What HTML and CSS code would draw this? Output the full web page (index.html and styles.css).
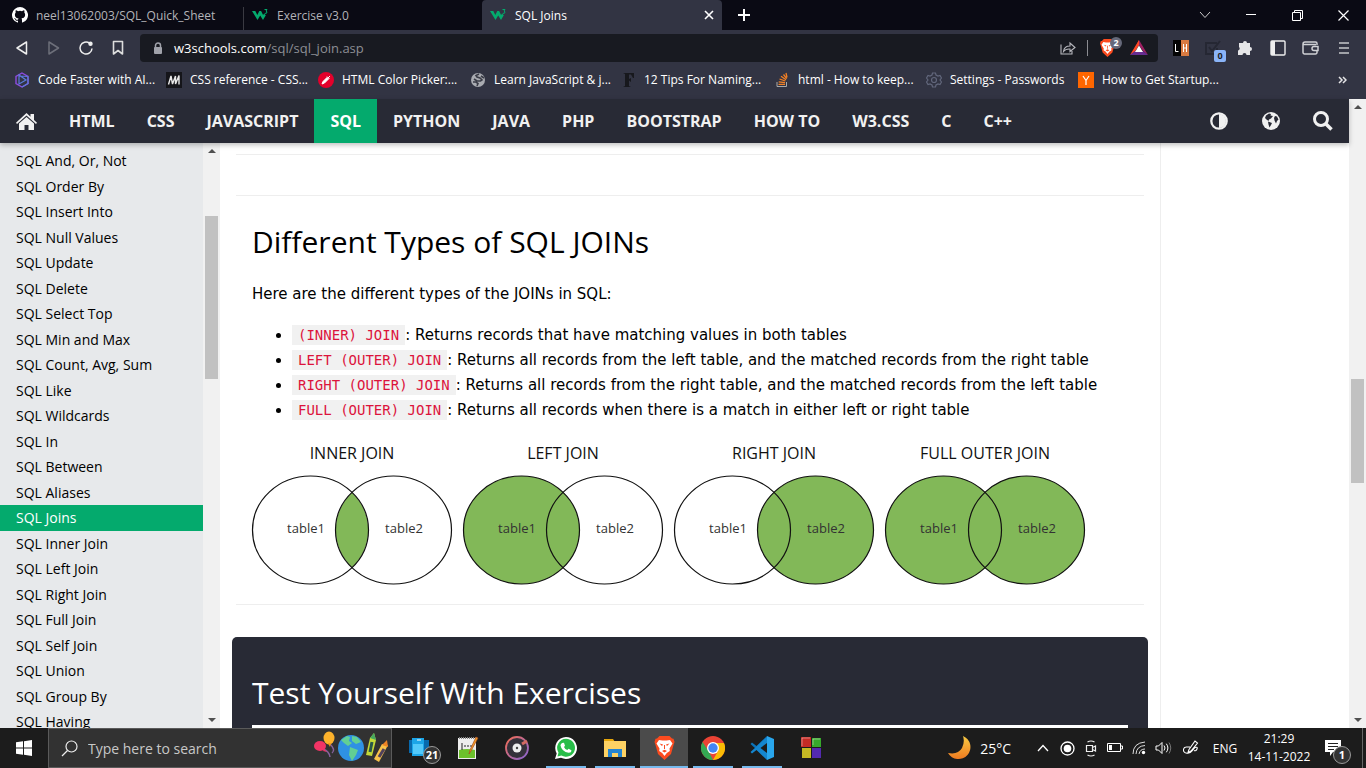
FILE: index.html
```html
<!DOCTYPE html>
<html lang="en">
<head>
<meta charset="utf-8">
<title>SQL Joins</title>
<link rel="stylesheet" href="styles.css">
</head>
<body>
<svg class="defs" aria-hidden="true">
  <symbol id="w3" viewBox="0 0 17 14"><path d="M0 3h3.300l2 4 2-4h1.800l2 4 1-1.500 1.700 1.700L11 12 8.200 7.500 5.500 12z" fill="#04aa6d"/><path d="M12.500 1.500h2.500l-1 1.500q1.800.6.5 2.200l-1.700.2" fill="none" stroke="#04aa6d"/></symbol>
  <symbol id="brave" viewBox="0 0 20 24"><path d="M5 0h10l2.500 2.500L19 2.800 20 6l-1 3-2.500 9L10 24l-6.500-6L1 9 0 6l1-3.200 1.500-.3z" fill="#fb4b1f"/><path d="M4.500 4L8 4.500h4L15.500 4 18 7.500l-3 5 .3 2.500-3 2L10 20l-2.300-3-3-2 .3-2.500-3-5z" fill="#fff"/><path d="M5 7.500l3.500 1L7.500 10zM15 7.500l-3.500 1 1 1.500zM9.500 9h1v4h-1zM7.500 15l2.500-1.300 2.500 1.300-2.500 1.500z" fill="#fb4b1f"/></symbol>
</svg>

<header class="browser">
  <div class="tabs">
    <button class="tab"><svg width="16" height="16" viewBox="0 0 16 16"><path fill="#fff" d="M8 0a8 8 0 0 0-2.530 15.590c.4.070.55-.17.55-.38v-1.490c-2.230.48-2.700-.95-2.700-.95-.36-.92-.890-1.170-.890-1.170-.73-.5.060-.49.060-.49.800.060 1.230.83 1.230.83.710 1.220 1.870.87 2.330.66.070-.52.280-.87.500-1.070-1.770-.2-3.640-.89-3.640-3.950 0-.87.310-1.590.820-2.150-.08-.2-.36-1.010.080-2.120 0 0 .67-.21 2.200.82a7.600 7.600 0 0 1 4 0c1.530-1.040 2.200-.82 2.200-.82.440 1.110.160 1.920.080 2.120.510.560.820 1.280.820 2.150 0 3.070-1.870 3.750-3.650 3.950.290.250.540.730.540 1.480v2.200c0 .21.150.46.550.38A8 8 0 0 0 8 0z"/></svg><span>neel13062003/SQL_Quick_Sheet</span></button>
    <button class="tab divided"><svg width="17" height="14"><use href="#w3"/></svg><span>Exercise v3.0</span></button>
    <button class="tab current"><svg width="17" height="14"><use href="#w3"/></svg><span>SQL Joins</span>
      <svg class="tab-close" width="10" height="10" viewBox="0 0 10 10"><path d="M1 1l8 8M9 1L1 9" stroke="#fff" stroke-width="1.600"/></svg></button>
    <button class="new-tab" aria-label="New tab"><svg width="12" height="12" viewBox="0 0 12 12"><path d="M6 0v12M0 6h12" stroke="#fff" stroke-width="2"/></svg></button>
    <div class="window-controls">
      <button aria-label="Search tabs"><svg width="12" height="12" viewBox="0 0 12 12"><path d="M1 3l5 5.500L11 3" fill="none" stroke="#ccc"/></svg></button>
      <button aria-label="Minimize"><svg width="10" height="12" viewBox="0 0 10 12"><path d="M0 5.500h10" stroke="#fff"/></svg></button>
      <button aria-label="Restore"><svg width="11" height="11" viewBox="0 0 11 11"><path d="M.5 2.500h8v8h-8zM2.500 2.500v-2h8v8h-2" fill="none" stroke="#fff"/></svg></button>
      <button aria-label="Close"><svg width="11" height="11" viewBox="0 0 11 11"><path d="M.5.5l10 10M10.500.5l-10 10" stroke="#fff" stroke-width="1.200"/></svg></button>
    </div>
  </div>

  <div class="toolbar">
    <div class="history">
      <button aria-label="Back"><svg width="14" height="16" viewBox="0 0 14 16"><path d="M11.500 2v12L2 8z" fill="none" stroke="#eee" stroke-width="1.500" stroke-linejoin="round"/></svg></button>
      <button aria-label="Forward"><svg width="14" height="16" viewBox="0 0 14 16"><path d="M2 2v12l9.500-6z" fill="none" stroke="#6d6f7a" stroke-width="1.500" stroke-linejoin="round"/></svg></button>
      <button aria-label="Reload"><svg width="16" height="16" viewBox="0 0 16 16"><path d="M11.500 3.200A6 6 0 1 0 14 8.500" fill="none" stroke="#eee" stroke-width="1.500"/><circle cx="12.500" cy="3.800" r="2.200" fill="#eee"/></svg></button>
      <button aria-label="Bookmark"><svg width="12" height="16" viewBox="0 0 12 16"><path d="M1.500 1.500h9v12.500L6 10.500 1.500 14z" fill="none" stroke="#ddd" stroke-width="1.600" stroke-linejoin="round"/></svg></button>
    </div>
    <div class="address">
      <svg width="10" height="13" viewBox="0 0 10 13"><path d="M2.500 6V3.500a2.500 2.500 0 0 1 5 0V6" fill="none" stroke="#a0a2aa" stroke-width="1.500"/><rect x="1" y="5" width="8" height="7" rx="1" fill="#a0a2aa"/></svg>
      <div class="url" role="textbox" aria-label="Address">w3schools.com<span>/sql/sql_join.asp</span></div>
      <button aria-label="Share"><svg width="16" height="16" viewBox="0 0 16 16"><path d="M1 4.500v9.500h11v-3M3.500 11.500C4 7.500 6.500 6 10 6V3l5 4.500-5 4V9C7 8.800 5 9.500 3.500 11.500z" fill="none" stroke="#b8b9bf" stroke-width="1.100"/></svg></button>
      <i class="address-line"></i>
      <button class="shield" aria-label="Shields"><svg width="15" height="18"><use href="#brave"/></svg><b>2</b></button>
      <button aria-label="Rewards"><svg width="18" height="16" viewBox="0 0 18 16"><path d="M9 0l9 15-5-4-4-6-4 6-2 .5z" fill="#9e1f63"/><path d="M9 0L0 15l5-3.500L9 5z" fill="#ff4724"/><path d="M0 15h18l-5-4H5z" fill="#662d91"/><path d="M9 5.500L5 12h8z" fill="#fff"/></svg></button>
    </div>
    <div class="extensions">
      <button aria-label="LH extension"><svg width="16" height="16" viewBox="0 0 16 16"><path fill="#050505" d="M0 0h8v16H0z"/><path fill="#d97a41" d="M8 0h8v16H8z"/><path d="M2.500 4v7.500h3M10.500 4v8M13.500 4v8M10.500 8h3" fill="none" stroke="#fff"/></svg></button>
      <button class="counter" aria-label="Tasks"><svg width="16" height="16" viewBox="0 0 16 16"><path d="M12 3H1v11h11V8M4 7l3 4 8-10" fill="none" stroke="#252733" stroke-width="2"/></svg><b>0</b></button>
      <button aria-label="Extensions"><svg width="16" height="16" viewBox="0 0 16 16"><path fill="#e6e6e8" d="M2 3h4a2 2 0 1 1 4 0h3v4a2 2 0 1 1 0 4v4H9.500a2 2 0 0 0-4 0H1v-4.500a2 2 0 0 0 1-3.500z"/></svg></button>
      <button aria-label="Sidebar"><svg width="16" height="16" viewBox="0 0 16 16"><rect x="1" y="1" width="14" height="14" rx="1" fill="none" stroke="#eee" stroke-width="1.400"/><path fill="#eee" d="M1 1h4v14H1z"/></svg></button>
      <button aria-label="Wallet"><svg width="17" height="16" viewBox="0 0 17 16"><path d="M15 5V3.500a1.500 1.500 0 0 0-1.500-1.500H3a2 2 0 0 0-2 2v8.500A1.500 1.500 0 0 0 2.500 14h11a1.500 1.500 0 0 0 1.500-1.500V11M1 4.500h13M16 6.500h-4a2 2 0 0 0 0 4h4z" fill="none" stroke="#d0d1d5" stroke-width="1.500"/></svg></button>
      <button aria-label="Menu"><svg width="10" height="12" viewBox="0 0 10 12"><path d="M0 1h10M0 6h10M0 11h10" stroke="#c5c6ca" stroke-width="1.600"/></svg></button>
    </div>
  </div>

  <nav class="bookmarks" aria-label="Bookmarks">
    <a href="#"><svg width="16" height="16" viewBox="0 0 16 16"><path d="M8 1l6 3.500v7L8 15l-6-3.500v-7z" fill="none" stroke="#8d4be0" stroke-width="1.400"/><path d="M8 15l6-3.500v-7M5 3v9l7-4zM14 4.500L5 4" fill="none" stroke="#5b7bdc" stroke-width="1.200"/></svg><span>Code Faster with AI...</span></a>
    <a href="#"><svg width="16" height="16" viewBox="0 0 16 16"><path fill="#15151a" d="M0 0h16v16H0z"/><path d="M2.500 12.500L5 4l1.500 8L9.500 4v8L13 3.500v9" fill="none" stroke="#e8e8e8" stroke-width="1.400" stroke-linejoin="bevel"/></svg><span>CSS reference - CSS...</span></a>
    <a href="#"><svg width="16" height="16" viewBox="0 0 16 16"><circle cx="8" cy="8" r="8" fill="#e4002b"/><path d="M4 12l1-2.500 4-4L10.500 7l-4 4zM9 4.500L11.500 7M10 6l2-2" fill="#fff" stroke="#fff"/></svg><span>HTML Color Picker:...</span></a>
    <a href="#"><svg width="16" height="16" viewBox="0 0 16 16"><circle cx="8" cy="8" r="7" fill="#a9abb1"/><path d="M9 2l-3 1.500L7 5l3 1 2 2-1.500 1H7L4 7M3 10h3l2 1.500L7 14M11 4l3 2" fill="none" stroke="#3a3c47" stroke-width="1.600"/></svg><span>Learn JavaScript &amp; j...</span></a>
    <a href="#"><svg width="14" height="16" viewBox="0 0 14 16"><path fill="#17181d" d="M1 1h11v5h-1L9 2.500H7V7l2-1v4L7 8.500V14l2 1H1l2-1V2z"/></svg><span>12 Tips For Naming...</span></a>
    <a href="#"><svg width="16" height="16" viewBox="0 0 16 16"><path d="M3 10v4.500h9.500V10" fill="none" stroke="#aaa"/><path d="M4.500 12.300H11M4.700 9.800l6.300.8M5.500 7l5.900 2M7 4.300l5 3.500M9.500 2.500l3.200 4.200M12 1l1 4.500" stroke="#f48024" stroke-width="1.300"/></svg><span>html - How to keep...</span></a>
    <a href="#"><svg width="16" height="16" viewBox="0 0 16 16"><path d="M6.500 1h3l.5 2 2 1 2-.6 1.500 2.600L14 8l1.500 2-1.500 2.600-2-.6-2 1-.5 2h-3L6 13l-2-1-2 .6L.5 10 2 8 .5 6 2 3.400 4 4l2-1z" fill="none" stroke="#62677c" stroke-width="1.200"/><circle cx="8" cy="8" r="2.500" fill="none" stroke="#62677c" stroke-width="1.200"/></svg><span>Settings - Passwords</span></a>
    <a href="#"><svg width="16" height="16" viewBox="0 0 16 16"><path fill="#f60" d="M0 0h16v16H0z"/><path d="M5 4l3 4.500L11 4M8 8.500V13" fill="none" stroke="#fff" stroke-width="1.200"/></svg><span>How to Get Startup...</span></a>
    <button class="more" aria-label="More bookmarks"><svg width="9" height="8" viewBox="0 0 9 8"><path d="M1 1l3 3-3 3M5 1l3 3-3 3" fill="none" stroke="#e4e4e6" stroke-width="1.500"/></svg></button>
  </nav>
</header>

<div class="viewport">
  <div class="page">
    <nav class="topnav" aria-label="Tutorials">
      <a class="home" href="#" aria-label="Home"><svg width="21" height="17" viewBox="0 0 21 17"><path fill="#f1f1f1" d="M10.500 0l4 3.700V1H18v6l3 2.700-1 1.300L10.500 2.500 1 11 0 9.700z"/><path fill="#f1f1f1" d="M10.500 4L18 10.500V17h-5.500v-5h-4v5H3v-6.500z"/></svg></a>
      <a href="#">HTML</a><a href="#">CSS</a><a href="#">JAVASCRIPT</a><a class="selected" href="#">SQL</a><a href="#">PYTHON</a><a href="#">JAVA</a><a href="#">PHP</a><a href="#">BOOTSTRAP</a><a href="#">HOW TO</a><a href="#">W3.CSS</a><a href="#">C</a><a href="#">C++</a>
      <div class="site-tools">
        <button aria-label="Dark mode"><svg width="18" height="18" viewBox="0 0 18 18"><circle cx="9" cy="9" r="7.700" fill="none" stroke="#f1f1f1" stroke-width="2.300"/><path d="M9 2v14a7 7 0 0 0 0-14z" fill="#f1f1f1"/></svg></button>
        <button aria-label="Language"><svg width="18" height="18" viewBox="0 0 18 18"><circle cx="9" cy="9" r="9" fill="#f1f1f1"/><path fill="#282a35" d="M4 3.500l3-2 2 .5-.5 1.500L11 4 9 6.500 7 7.500 6.500 9l-2-1.500L3 6zM6 9.500l4 1.500-1 2-1.500 2.500-1-3zM13 4l2 .5 1.500 3L15 9l-1 2.500-1.500-3L12 6z"/></svg></button>
        <button aria-label="Search"><svg width="20" height="20" viewBox="0 0 20 20"><circle cx="8" cy="8" r="6.500" fill="none" stroke="#f1f1f1" stroke-width="3"/><path d="M12.500 12.500l6 6" stroke="#f1f1f1" stroke-width="3.500"/></svg></button>
      </div>
    </nav>

    <div class="columns">
      <nav class="sidebar" aria-label="SQL tutorial">
        <ul>
          <li><a href="#">SQL And, Or, Not</a></li>
          <li><a href="#">SQL Order By</a></li>
          <li><a href="#">SQL Insert Into</a></li>
          <li><a href="#">SQL Null Values</a></li>
          <li><a href="#">SQL Update</a></li>
          <li><a href="#">SQL Delete</a></li>
          <li><a href="#">SQL Select Top</a></li>
          <li><a href="#">SQL Min and Max</a></li>
          <li><a href="#">SQL Count, Avg, Sum</a></li>
          <li><a href="#">SQL Like</a></li>
          <li><a href="#">SQL Wildcards</a></li>
          <li><a href="#">SQL In</a></li>
          <li><a href="#">SQL Between</a></li>
          <li><a href="#">SQL Aliases</a></li>
          <li class="selected"><a href="#">SQL Joins</a></li>
          <li><a href="#">SQL Inner Join</a></li>
          <li><a href="#">SQL Left Join</a></li>
          <li><a href="#">SQL Right Join</a></li>
          <li><a href="#">SQL Full Join</a></li>
          <li><a href="#">SQL Self Join</a></li>
          <li><a href="#">SQL Union</a></li>
          <li><a href="#">SQL Group By</a></li>
          <li><a href="#">SQL Having</a></li>
        </ul>
      </nav>
      <div class="scrollbar sidebar-scroll" aria-hidden="true"><i class="up"></i><div class="track"><i class="thumb"></i></div><i class="down"></i></div>

      <main>
        <hr>
        <hr>
        <section class="article">
          <h2>Different Types of SQL JOINs</h2>
          <p>Here are the different types of the JOINs in SQL:</p>
          <ul>
            <li><code>(INNER) JOIN</code>: Returns records that have matching values in both tables</li>
            <li><code>LEFT (OUTER) JOIN</code>: Returns all records from the left table, and the matched records from the right table</li>
            <li><code>RIGHT (OUTER) JOIN</code>: Returns all records from the right table, and the matched records from the left table</li>
            <li><code>FULL (OUTER) JOIN</code>: Returns all records when there is a match in either left or right table</li>
          </ul>
          <div class="diagrams">
            <svg class="venn" viewBox="0 0 201 144"><text class="name" x="100" y="19">INNER JOIN</text><path class="fill" d="M100 52.500a58 54 0 0 1 0 75a58 54 0 0 1 0-75z"/><ellipse cx="58.500" cy="90" rx="58" ry="54"/><ellipse cx="141.500" cy="90" rx="58" ry="54"/><text x="54" y="93">table1</text><text x="152" y="93">table2</text></svg>
            <svg class="venn" viewBox="0 0 201 144"><text class="name" x="100" y="19">LEFT JOIN</text><ellipse class="fill" cx="58.500" cy="90" rx="58" ry="54"/><ellipse cx="58.500" cy="90" rx="58" ry="54"/><ellipse cx="141.500" cy="90" rx="58" ry="54"/><text x="54" y="93">table1</text><text x="152" y="93">table2</text></svg>
            <svg class="venn" viewBox="0 0 201 144"><text class="name" x="100" y="19">RIGHT JOIN</text><ellipse class="fill" cx="141.500" cy="90" rx="58" ry="54"/><ellipse cx="58.500" cy="90" rx="58" ry="54"/><ellipse cx="141.500" cy="90" rx="58" ry="54"/><text x="54" y="93">table1</text><text x="152" y="93">table2</text></svg>
            <svg class="venn" viewBox="0 0 201 144"><text class="name" x="100" y="19">FULL OUTER JOIN</text><ellipse class="fill" cx="58.500" cy="90" rx="58" ry="54"/><ellipse class="fill" cx="141.500" cy="90" rx="58" ry="54"/><ellipse cx="58.500" cy="90" rx="58" ry="54"/><ellipse cx="141.500" cy="90" rx="58" ry="54"/><text x="54" y="93">table1</text><text x="152" y="93">table2</text></svg>
          </div>
        </section>
        <hr>
        <section class="exercise">
          <h2>Test Yourself With Exercises</h2>
          <div class="exercise-window"></div>
        </section>
      </main>
      <aside class="rail"></aside>
    </div>
  </div>
  <div class="scrollbar page-scroll" aria-hidden="true"><i class="up"></i><div class="track"><i class="thumb"></i></div><i class="down"></i></div>
</div>

<footer class="taskbar">
  <button class="start" aria-label="Start"><svg width="16" height="16" viewBox="0 0 16 16"><path fill="#fff" d="M0 2.300L7 1.300V7.500H0zM8 1.200L16 0v7.500H8zM0 8.500h7v6.200l-7-1zM8 8.500h8V16l-8-1.200z"/></svg></button>
  <label class="search">
    <svg width="17" height="17" viewBox="0 0 17 17"><circle cx="10.500" cy="6.500" r="5.500" fill="none" stroke="#eee" stroke-width="1.200"/><path d="M6.500 10.500L1 16" stroke="#eee" stroke-width="1.300"/></svg>
    <input type="text" placeholder="Type here to search" aria-label="Type here to search">
    <svg width="76" height="34" viewBox="0 0 76 34"><path d="M9 18q6 2 7 8M16 13q6 6 2 9" fill="none" stroke="#87619c" stroke-width="1.500"/><ellipse cx="6" cy="15" rx="6" ry="5" fill="#f23465"/><path d="M10 18l3 3-4-1z" fill="#f23465"/><ellipse cx="15" cy="7" rx="5.500" ry="6.500" fill="#fdb22b"/><path d="M14 12h3l-1 4z" fill="#f59b17"/><circle cx="37" cy="17" r="13" fill="#2f91e3"/><path fill="#62cf94" d="M27 9l6-4 3 1-1 4 3 2-4 3-4-3zM38 5l5 1 4 5-5 2-4-3zM36 16l8 3-2 5-4 6-3-6z"/><path d="M56 7l4-5 2 7-4 16-6-1z" fill="#c4d938"/><path d="M56 7l4-5 2 7z" fill="#46a95f"/><path d="M58 11l-2 10" stroke="#28564b" stroke-width="3"/><path d="M74 14l-9 17-5-3 8-15z" fill="#f8c34b"/><path d="M68 14l5-5 1 7z" fill="#ed8425"/><path d="M70 18l-5 8" stroke="#50415c" stroke-width="3"/></svg>
  </label>
  <div class="apps">
    <button class="badge-app" aria-label="Your Phone"><svg width="22" height="24" viewBox="0 0 22 24"><path fill="#0869ad" d="M1 4h20v13H1z"/><rect x="4" y="2" width="12" height="18" fill="#1ba5e8"/><path fill="#53c9fa" d="M5 8h10v10H5z"/><path d="M9 4h4" stroke="#fff"/></svg><b>21</b></button>
    <button aria-label="Notepad++"><svg width="24" height="24" viewBox="0 0 24 24"><path fill="#eee" d="M2 2h18v21H2z"/><path fill="#6cc12b" d="M3 14q8-2 16 0v8H3z"/><path d="M3 2h17" stroke="#888" stroke-width="2" stroke-dasharray="1 1"/><path d="M6 7v7M8 10h2M11 10h2M14 10h2" stroke="#222"/><path d="M22 2l-7 13-2 3 1-4 6-13z" fill="#f49e24" stroke="#a64c22" stroke-width=".7"/></svg></button>
    <button aria-label="Music"><svg width="24" height="24" viewBox="0 0 24 24"><defs><linearGradient id="ring" x1="0" y1="0" x2="1" y2="1"><stop stop-color="#f36d53"/><stop offset="1" stop-color="#8564d4"/></linearGradient></defs><circle cx="12" cy="12" r="11" fill="#34313a" stroke="url(#ring)" stroke-width="1.800"/><circle cx="12" cy="12" r="4.500" fill="#eee"/><circle cx="12" cy="12" r="1.200" fill="#444"/><path d="M17 8l5-3" stroke="#d26b62" stroke-width="3"/></svg></button>
    <button class="running" aria-label="WhatsApp"><svg width="24" height="24" viewBox="0 0 24 24"><path fill="#fff" d="M12 1a11 11 0 1 1-5 20.800L1 23l1.700-5.500A11 11 0 0 1 12 1z"/><path fill="#28bd49" d="M12 2.800a9 9 0 1 1-4.500 16.800L3.500 20.500l1-4A9 9 0 0 1 12 2.800z"/><path fill="#fff" d="M8 7l2-.3 1 3-1 1.200q1 2.200 3.300 3.200l1.300-1.300 2.800 1.500q.2 2.500-2.700 2.500-7-1-8.200-7.300Q6.500 8 8 7z"/></svg></button>
    <button class="running" aria-label="File Explorer"><svg width="24" height="24" viewBox="0 0 24 24"><path fill="#e6a60b" d="M1 3h9l2 3H1z"/><path fill="#fdd264" d="M1 5h22v16H1z"/><path fill="#2485d2" d="M5 13h14v8h-4v-4H9v4H5z"/></svg></button>
    <button class="running active" aria-label="Brave"><svg width="21" height="24"><use href="#brave"/></svg></button>
    <button class="running" aria-label="Chrome"><svg width="24" height="24" viewBox="0 0 24 24"><circle cx="12" cy="12" r="12" fill="#ea4335"/><path fill="#34a853" d="M1.600 6L8 16l4 8A12 12 0 0 1 1.600 6z"/><path fill="#fbbc05" d="M12 7h11a12 12 0 0 1-11 17l5-9z"/><circle cx="12" cy="12" r="6" fill="#fff"/><circle cx="12" cy="12" r="4.700" fill="#4285f4"/></svg></button>
    <button class="running" aria-label="Visual Studio Code"><svg width="24" height="24" viewBox="0 0 24 24"><path fill="#0b73b9" d="M17 0L6.500 10 2 6.500.5 8l17 15.500 1-5V6z"/><path fill="#1486cf" d="M17 24L6.500 14 2 17.500.5 16 17 1z"/><path fill="#29a6ec" d="M17 0l7 3v18l-7 3z"/><path fill="#1c1c1c" d="M17 7v10l-6.500-5z"/></svg></button>
    <button aria-label="Code::Blocks"><svg width="22" height="24" viewBox="0 0 22 24"><path fill="#c52b25" d="M1 1h10v10H1z"/><path fill="#37a92b" d="M12 2h9v9h-9z"/><path fill="#c5b924" d="M2 12h9v10H2z"/><path fill="#542ab0" d="M12 12h9v10h-9z"/><path d="M2 10V2h8M13 9V3h7" fill="none" stroke="#fff" stroke-opacity=".4"/></svg></button>
  </div>
  <div class="tray">
    <button class="weather"><svg width="24" height="24" viewBox="0 0 24 24"><defs><linearGradient id="moon" x2="0" y2="1"><stop stop-color="#f8ca43"/><stop offset="1" stop-color="#ee7a20"/></linearGradient></defs><path fill="url(#moon)" d="M15 0a12 12 0 1 1-15 17q10 2 14-5 3-6 1-12z"/></svg><span>25°C</span></button>
    <button aria-label="Show hidden icons"><svg width="12" height="8" viewBox="0 0 12 8"><path d="M1 7l5-5.500L11 7" fill="none" stroke="#fff" stroke-width="1.300"/></svg></button>
    <button aria-label="Recorder"><svg width="15" height="15" viewBox="0 0 15 15"><circle cx="7.500" cy="7.500" r="6.500" fill="none" stroke="#fff" stroke-width="1.300"/><circle cx="7.500" cy="7.500" r="3.800" fill="#fff"/></svg></button>
    <button aria-label="Meet now"><svg width="13" height="17" viewBox="0 0 13 17"><path d="M1.500 5.500h6v6h-6zM7.500 7.500l3-1.500v5l-3-1.500M2.500 2q3.500-2 7 0M2.500 15q3.500 2 7 0" fill="none" stroke="#eee" stroke-width="1.200"/></svg></button>
    <button aria-label="Battery"><svg width="16" height="10" viewBox="0 0 16 10"><path d="M.5.5h13v8H.5zM14 3h1.500v3H14" fill="none" stroke="#fff"/><path fill="#fff" d="M2 2h3v5H2z"/></svg></button>
    <button aria-label="Network"><svg width="14" height="14" viewBox="0 0 14 14"><path d="M1 13Q1 2 13 1M4 13Q4.500 5 13 4.500M7 13q1-5 6-5" fill="none" stroke="#ddd"/><circle cx="11.500" cy="11.500" r="1.700" fill="#fff"/></svg></button>
    <button aria-label="Volume"><svg width="17" height="14" viewBox="0 0 17 14"><path d="M1 5h2.500L7 1.500v11L3.500 9H1z" fill="none" stroke="#fff"/><path d="M9 4.500q2 2.500 0 5M11.300 2.700q3.200 4.300 0 8.600" fill="none" stroke="#fff"/><path d="M14 1.500q3.500 5.500 0 11" fill="none" stroke="#777"/></svg></button>
    <button class="pen" aria-label="Pen"><svg width="17" height="16" viewBox="0 0 17 16"><path d="M6 9.500L12 1l2.500 2L8 11l-3 1.500zM7 7H4a3 3 0 0 0-1 6q4 1 6-2l3-3.500q3-1 2 1.500t-3 1.500" fill="none" stroke="#fff" stroke-width="1.100"/></svg></button>
    <button class="lang">ENG</button>
    <button class="clock"><time datetime="2022-11-14T21:29">21:29<br>14-11-2022</time></button>
    <button class="notices badge-app" aria-label="Notifications"><svg width="16" height="16" viewBox="0 0 16 16"><path fill="#fff" d="M0 0h16v12H8l-3 4v-4H0z"/><path d="M3 3.500h10M3 6.500h10M3 9.500h6" stroke="#222"/></svg><b>1</b></button>
  </div>
</footer>
</body>
</html>
```
FILE: styles.css
```css
* { box-sizing: border-box; }

body {
  margin: 0;
  height: 100vh;
  display: flex;
  flex-direction: column;
  overflow: hidden;
  font-family: "Open Sans", "Noto Sans", sans-serif;
  font-size: 12px;
}

button {
  display: flex;
  align-items: center;
  justify-content: center;
  padding: 0;
  border: 0;
  background: none;
  color: inherit;
  font: inherit;
}

a { color: inherit; text-decoration: none; }
svg { flex: none; display: block; }
.defs { position: absolute; width: 0; height: 0; }

/* Browser frame */
.browser { flex: none; background: #323443; color: #fff; }

.tabs { display: flex; height: 30px; background: #0a0a14; }
.tab {
  width: 240px;
  gap: 8px;
  padding: 0 8px 0 12px;
  justify-content: flex-start;
  color: #b3b3b8;
  white-space: nowrap;
}
.tab:first-child { width: 243px; }
.tab.divided { width: 239px; margin-top: 7px; padding: 0 8px 7px; border-left: 1px solid #3a3a42; }
.tab.current { background: #323443; color: #fff; border-radius: 4px 4px 0 0; padding-left: 8px; font-weight: 500; }
.tab-close { margin-left: auto; }
.new-tab { width: 44px; }
.window-controls { display: flex; margin-left: auto; }
.window-controls button { width: 46px; }

.toolbar { display: flex; align-items: center; height: 36px; padding-left: 6px; }
.history { display: flex; flex: none; }
.history button { width: 32px; height: 28px; }
.address {
  flex: 1;
  display: flex;
  align-items: center;
  height: 28px;
  margin: 0 6px;
  padding: 0 3px 0 13px;
  background: #181a21;
  border-radius: 4px;
}
.url { flex: 1; padding-left: 11px; font-size: 13px; color: #fff; }
.url span { color: #8d8e94; }
.address button { width: 32px; height: 28px; }
.address-line { width: 1px; height: 16px; margin: 0 3px; background: #8b8c92; }
.shield, .counter, .badge-app { position: relative; }
.shield b {
  position: absolute;
  top: 3px;
  right: 1px;
  width: 12px;
  border-radius: 6px;
  background: #66697a;
  font-size: 9px;
  line-height: 12px;
}
.extensions { display: flex; flex: none; padding-right: 6px; }
.extensions button { width: 33px; height: 28px; }
.extensions .counter { width: 31px; }
.counter b {
  position: absolute;
  right: 2px;
  bottom: 0;
  width: 12px;
  border-radius: 2px;
  background: #8ab4f8;
  color: #202124;
  font-size: 9px;
  line-height: 12px;
}

.bookmarks { display: flex; align-items: center; height: 33px; padding: 0 16px 6px 14px; }
.bookmarks a { display: flex; align-items: center; gap: 8px; flex: 0 1 152px; white-space: nowrap; }
.more { margin-left: auto; width: 16px; height: 20px; }

/* Page */
.viewport { flex: 1; display: flex; min-height: 0; background: #fff; }
.page { flex: 1; min-width: 0; display: flex; flex-direction: column; }

.topnav {
  flex: none;
  display: flex;
  position: relative;
  z-index: 1;
  height: 44px;
  background: #282a35;
  color: #f1f1f1;
  font-size: 16px;
  font-weight: 700;
  line-height: 44px;
  white-space: nowrap;
  box-shadow: 0 2px 5px rgba(0, 0, 0, .25);
}
.topnav a { padding: 0 16px; }
.topnav .home { display: flex; align-items: center; }
.topnav .selected { background: #04aa6d; color: #fff; }
.site-tools { display: flex; margin-left: auto; }
.site-tools button { width: 52px; height: 44px; }

.columns { flex: 1; display: flex; min-height: 0; }
.sidebar { flex: 0 0 203px; overflow: hidden; background: #e7e9eb; padding-top: 5px; }
.sidebar ul { margin: 0; padding: 0; list-style: none; font-size: 15px; color: #000; }
.sidebar li { height: 1.7em; padding-left: 16px; }
.sidebar a { display: block; font-size: 14px; line-height: 26px; }
.sidebar .selected { background: #04aa6d; color: #fff; }

.scrollbar { flex: 0 0 17px; display: flex; flex-direction: column; align-items: center; background: #f1f1f1; padding: 6px 0; }
.up, .down { border: 4px solid transparent; }
.up { border-top: 0; border-bottom-color: #505050; }
.down { border-bottom: 0; border-top-color: #505050; }
.track { flex: 1; width: 13px; margin: 7px 0; }
.thumb { display: block; background: #c1c1c1; }
.sidebar-scroll .track { padding-top: 56px; }
.sidebar-scroll .thumb { height: 33%; }
.page-scroll .track { padding-top: 263px; }
.page-scroll .thumb { height: 104px; }

main { flex: 1; min-width: 0; overflow: hidden; padding: 11px 16px 0; color: #000; }
hr { height: 1px; margin: 0 0 40px; border: 0; background: #eee; }
hr + .article { margin-top: -18px; }
.rail { flex: 0 0 189px; border-left: 1px solid #eee; }

h2 { margin: 0; font-size: 30px; font-weight: 400; line-height: 48px; }
.article { padding: 0 16px; font-family: "DejaVu Sans", sans-serif; font-size: 15px; line-height: 25px; }
.article h2 { font-family: "Open Sans", "Noto Sans", sans-serif; }
.article p { margin: 16px 0; }
.article ul { margin: 0; padding-left: 40px; white-space: nowrap; }
code { padding: 2px 6px; background: #f1f1f1; color: #dc143c; font-family: "DejaVu Sans Mono", monospace; font-size: 14px; }

.diagrams { display: flex; gap: 10px; margin: 17px 0 20px; }
.venn { width: 201px; height: 144px; overflow: visible; font-family: "Open Sans", "Noto Sans", sans-serif; font-size: 13px; }
.venn ellipse { fill: none; stroke: #111; stroke-width: 1.2; }
.venn .fill { fill: #82b858; stroke: none; }
.venn text { fill: #333; text-anchor: middle; }
.venn .name { fill: #111; font-size: 16px; }

.article + hr { margin-bottom: 32px; }
.exercise { margin: 0 -4px; padding: 32px 20px; background: #282a35; color: #fff; border-radius: 5px; }
.exercise-window { height: 80px; margin-top: 8px; background: #fff; }

/* Taskbar */
.taskbar { flex: none; display: flex; height: 40px; background: #1c1c1c; color: #fff; }
.start { width: 48px; }
.search { display: flex; align-items: center; width: 344px; padding: 0 1px 0 12px; border: 1px solid #5a5a5a; background: #323232; }
.search input { flex: 1; min-width: 0; padding: 0 10px; border: 0; background: none; font: inherit; font-size: 14px; color: #fff; }
.search input::placeholder { color: #c8c8c8; opacity: 1; }
.apps { display: flex; gap: 1px; margin-left: 3px; }
.apps button { width: 48px; border-bottom: 2px solid transparent; padding-top: 2px; }
.apps .running { background: linear-gradient(#76b9ed, #76b9ed) center bottom / 40px 2px no-repeat; background-origin: border-box; background-clip: border-box; }
.apps .active { background-color: #4b4b4b; background-size: 48px 2px; }
.badge-app b {
  position: absolute;
  right: 2px;
  bottom: 4px;
  width: 18px;
  border: 1px solid #9a9a9a;
  border-radius: 9px;
  background: #333;
  font-size: 11px;
  line-height: 16px;
}
.apps .badge-app b { bottom: 2px; }
.tray { display: flex; margin-left: auto; padding-right: 3px; border-right: 1px solid #666; margin-right: 3px; }
.tray button { width: 24px; }
.tray .weather { width: auto; gap: 8px; padding-right: 20px; font-size: 14px; }
.tray .pen { width: 32px; }
.tray .lang { width: 36px; }
.tray .clock { width: 72px; line-height: 18px; text-align: center; }
.tray .notices { width: 44px; padding-right: 8px; }
.tray .notices b { right: 8px; }
```
